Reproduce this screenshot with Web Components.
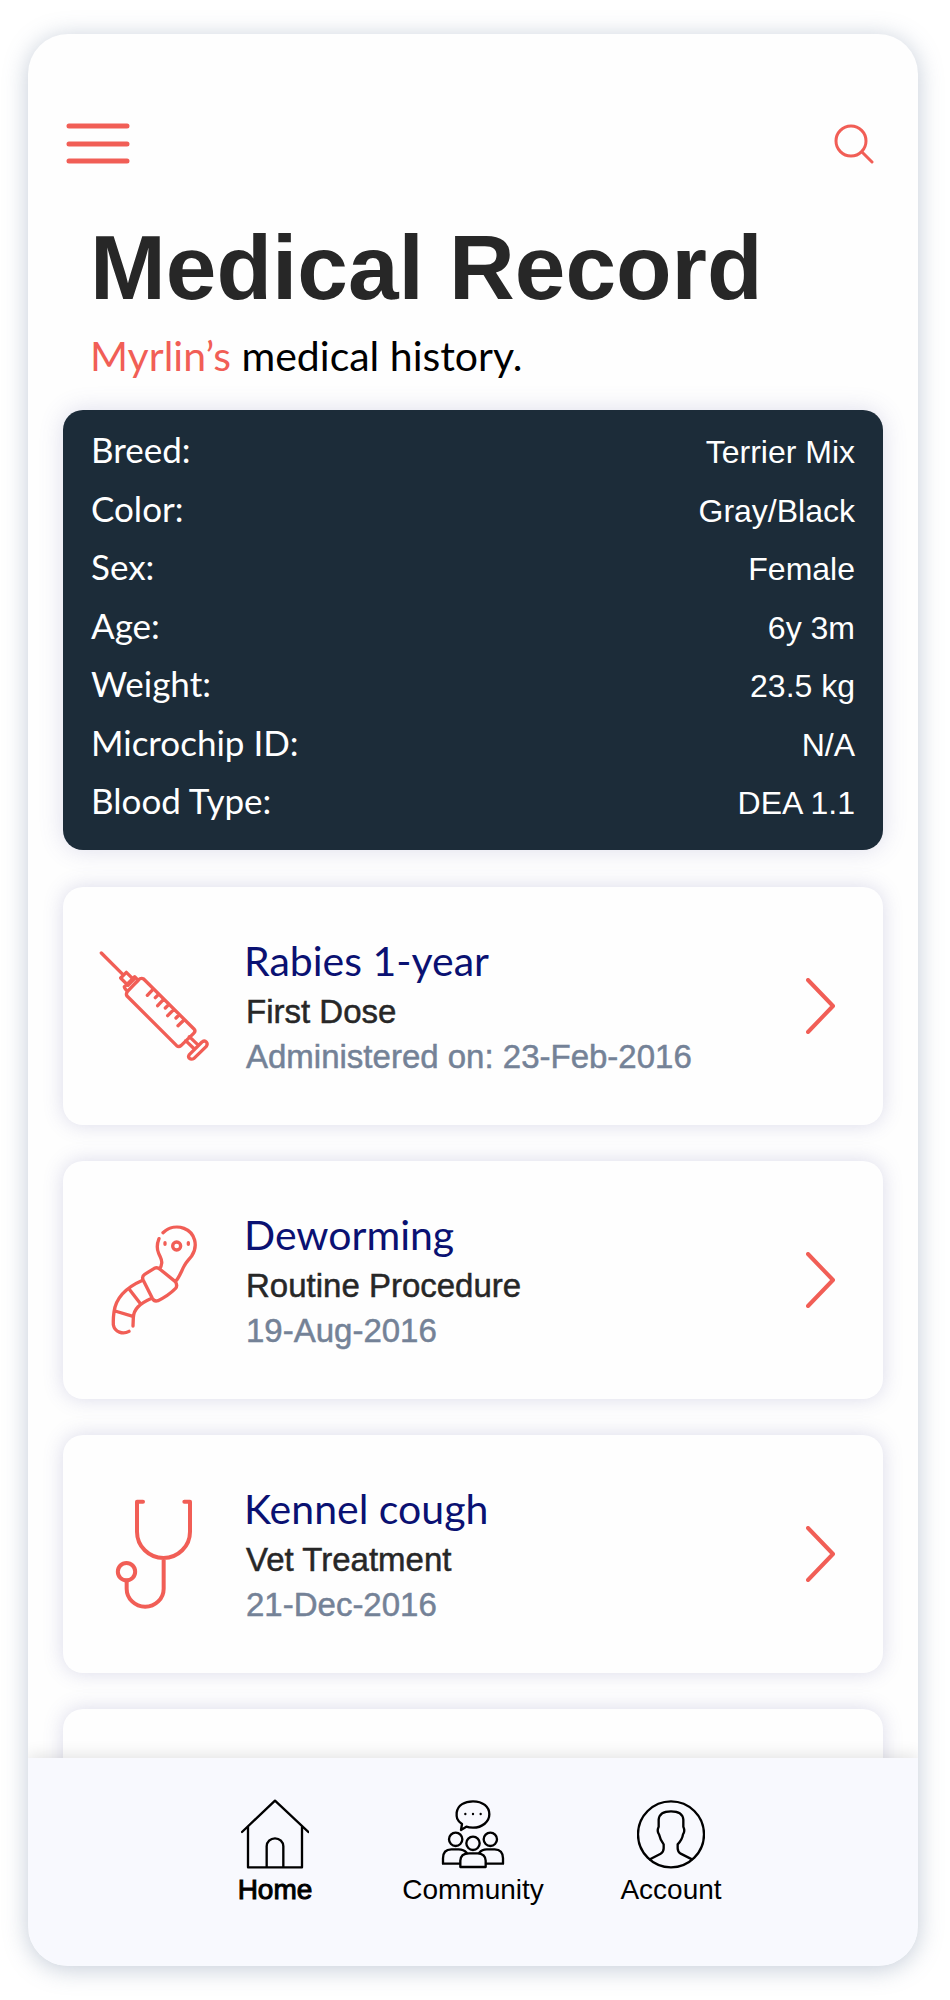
<!DOCTYPE html>
<html lang="en">
<head>
<meta charset="utf-8">
<meta name="viewport" content="width=device-width, initial-scale=1">
<title>Medical Record</title>
<style>
  html, body { margin: 0; height: 100%; background: #fff; }
  body { font-family: "Liberation Sans", Arial, sans-serif; color: #272727;
    --accent: #f15e56; --navy: #1c2c39; --title: #0a1172; --muted: #748297; --round: Lato, "Open Sans", sans-serif; }
</style>
</head>
<body>
<app-frame>
  <app-toolbar slot="header"></app-toolbar>
  <page-heading><span slot="owner">Myrlin’s</span> medical history.</page-heading>
  <pet-facts></pet-facts>
  <record-card icon="syringe"><span slot="title">Rabies 1-year</span><span slot="kind">First Dose</span><span slot="date">Administered on: 23-Feb-2016</span></record-card>
  <record-card icon="worm"><span slot="title">Deworming</span><span slot="kind">Routine Procedure</span><span slot="date">19-Aug-2016</span></record-card>
  <record-card icon="stethoscope"><span slot="title">Kennel cough</span><span slot="kind">Vet Treatment</span><span slot="date">21-Dec-2016</span></record-card>
  <record-card></record-card>
  <tab-bar slot="footer">
    <tab-item icon="home" current>Home</tab-item>
    <tab-item icon="community">Community</tab-item>
    <tab-item icon="account">Account</tab-item>
  </tab-bar>
</app-frame>

<script>
const icons = {
  syringe: `<svg viewBox="112 154 336 336"><path d="M122 163L187 228M197 221L219 243M197 221L180 238L202 260L219 243M222 234L233 245L200 278Q190 268 191 264M222 234L192 264M233 244Q241 236 249 241L400 391Q406 397 399 404L361 441Q354 446 348 441L199 292Q195 286 200 279ZM277 272L260 290M293 288L284 297M308 303L291 321M324 318L314 328M339 333L321 351M355 349L346 358M370 364L352 381M386 414L408 435M375 426L398 448M386 468L424 430Q432 424 437 430Q442 436 437 443L400 479Q392 484 386 479Q381 473 387 467"/></svg>`,
  worm: `<svg viewBox="112 136 336 336"><path d="M307 162C326 144 351 142 370 149C404 162 413 202 393 232C385 243 377 249 370 263C362 278 355 298 344 309M295 180C289 195 289 213 294 224C300 238 305 243 303 254Q302 263 297 271M297 271L344 309Q352 321 344 330Q322 352 292 366Q281 370 275 359L247 303Q243 293 252 287L281 269Q290 265 297 271M246 305C191 329 165 362 160 400C157 421 158 429 158 438C162 461 187 468 205 458M273 359C235 376 219 392 218 417L217 442M207 333L240 376M163 397L217 413"/><circle cx="348" cy="202" r="12"/><path d="M313 192V197M383 192V197"/></svg>`,
  stethoscope: `<svg style="stroke-width:12" viewBox="114 145 336 336"><path d="M249 156H231V246A79.500 79 0 0 0 390 246V156H373M311 326V417A55.500 54 0 0 1 200 417V393"/><circle cx="199.500" cy="366" r="26"/></svg>`,
  home: `<svg viewBox="63 118 204 206"><path d="M66 215L165 121L265 215M84 199V321H246V199M140 320V258A25 24 0 0 1 190 258V320"/></svg>`,
  community: `<svg viewBox="660 118 204 206"><path d="M729 191C713 180 712 170 713 157C716 134 737 123 762 123C791 123 811 139 811 162C811 184 790 202 762 202C754 202 747 201 742 199L726 209ZM723 310H672V294Q672 267 697 267H719Q734 267 743 277M781 277Q789 267 803 267H827Q852 268 852 294V310H801M724 320V301Q725 279 750 279H776Q799 280 800 301V320Z"/><circle cx="710" cy="237" r="20"/><circle cx="762" cy="249" r="20"/><circle cx="814" cy="237" r="20"/><path stroke-width="7" d="M739 161V161.100M762 161V161.100M785 161V161.100"/></svg>`,
  account: `<svg viewBox="1254 118 204 206"><circle cx="1356" cy="222" r="99"/><path d="M1293 297L1325 280Q1334 275 1334 264V252Q1323 237 1320 222Q1313 212 1319 199V178Q1321 153 1356 153Q1391 153 1393 178V199Q1399 212 1392 222Q1390 237 1376 252V264Q1376 275 1385 280L1419 297"/></svg>`,
  menu: `<svg viewBox="0 0 64 42"><path d="M3 4H61M3 22H61M3 39H61"/></svg>`,
  search: `<svg viewBox="0 0 42 42"><circle cx="18" cy="19" r="15"/><path d="M29 30L39 40"/></svg>`,
  chevron: `<svg viewBox="0 0 30 56"><path d="M2 2L27 28L2 54"/></svg>`
};
const iconCss = `svg{display:block;fill:none;stroke:currentColor;stroke-linecap:round;stroke-linejoin:round}`;

function define(name, render) {
  customElements.define(name, class extends HTMLElement {
    constructor() { super(); this.attachShadow({ mode: "open" }); }
    connectedCallback() { this.shadowRoot.innerHTML = render(this); }
  });
}

define("app-frame", () => `
<style>
  :host{display:flex;flex-direction:column;box-sizing:border-box;height:100vh;padding:34px 32px 34px 28px}
  .frame{flex:1;min-height:0;display:flex;flex-direction:column;overflow:hidden;background:#fefefe;border-radius:40px;box-shadow:0 3px 24px rgba(96,118,150,.38)}
  main{flex:1;min-height:0;overflow:hidden;padding:0 35px}
</style>
<div class="frame"><slot name="header"></slot><main><slot></slot></main><slot name="footer"></slot></div>`);

define("app-toolbar", () => `
<style>${iconCss}
  :host{display:flex;justify-content:space-between;padding:88px 43px 0 38px;color:var(--accent)}
  button{all:unset;cursor:pointer;height:42px}
  .menu svg{width:64px;height:42px;stroke-width:5}
  .search svg{width:42px;height:42px;stroke-width:3}
</style>
<button class="menu" aria-label="Menu">${icons.menu}</button>
<button class="search" aria-label="Search">${icons.search}</button>`);

define("page-heading", () => `
<style>
  :host{display:block;padding:52px 27px 0}
  h1{margin:0;font-size:91px;line-height:104px;font-weight:700;color:#272727}
  p{margin:12px 0 30px;font-family:var(--round);font-size:41px;line-height:48px;color:#000}
  ::slotted([slot=owner]){color:var(--accent)}
</style>
<h1>Medical Record</h1><p><slot name="owner"></slot><slot></slot></p>`);

const facts = [["Breed","Terrier Mix"],["Color","Gray/Black"],["Sex","Female"],["Age","6y 3m"],["Weight","23.5 kg"],["Microchip ID","N/A"],["Blood Type","DEA 1.1"]];
define("pet-facts", () => `
<style>
  :host{display:block;margin-bottom:37px;border-radius:20px;background:var(--navy);color:#fff;box-shadow:0 0 24px rgba(90,90,160,.2)}
  dl{margin:0;box-sizing:border-box;min-height:440px;padding:12px 28px 18px;display:grid;grid-auto-rows:1fr}
  div{display:flex;justify-content:space-between;align-items:baseline;line-height:54px}
  dt{font-family:var(--round);font-size:35px}
  dd{margin:0;font-size:32px}
</style>
<dl>${facts.map(([k, v]) => `<div><dt>${k}:</dt><dd>${v}</dd></div>`).join("")}</dl>`);

define("record-card", el => {
  const icon = el.getAttribute("icon");
  return `
<style>${iconCss}
  :host{display:block;min-height:238px;margin-bottom:36px;border-radius:20px;background:#fefefe;box-shadow:0 0 20px rgba(90,90,160,.22)}
  a{box-sizing:border-box;min-height:238px;display:flex;align-items:center;gap:34px;padding:0 47px 0 35px;color:var(--accent);text-decoration:none}
  .icon svg{width:112px;height:112px;stroke-width:10}
  .text{flex:1;padding-top:4px}
  h2,p{margin:0;font-size:33px;line-height:45px;font-weight:400}
  h2{margin-bottom:4px;font-family:var(--round);font-size:41px;line-height:48px;color:var(--title)}
  p{padding-left:2px;-webkit-text-stroke:.5px currentColor}
  .kind{color:#272727}
  .date{color:var(--muted)}
  .go svg{width:30px;height:56px;stroke-width:4}
</style>` + (icon ? `<a href="#${icon}"><span class="icon">${icons[icon]}</span>
<div class="text"><h2><slot name="title"></slot></h2><p class="kind"><slot name="kind"></slot></p><p class="date"><slot name="date"></slot></p></div>
<span class="go">${icons.chevron}</span></a>` : "");
});

define("tab-bar", () => `
<style>
  :host{display:block;position:relative;background:#f8f9fe;box-shadow:0 -2px 16px rgba(0,0,0,.12)}
  nav{display:grid;grid-template-columns:repeat(3,198px);justify-content:center;box-sizing:border-box;min-height:208px;padding-top:41px}
</style>
<nav aria-label="Main"><slot></slot></nav>`);

define("tab-item", el => `
<style>${iconCss}
  :host{display:block;color:#000}
  a{display:flex;flex-direction:column;align-items:center;color:inherit;text-decoration:none;font-size:28px;line-height:42px}
  :host([current]) a{-webkit-text-stroke:1px currentColor}
  svg{width:68px;height:70px;stroke-width:7}
</style>
<a href="#${el.getAttribute("icon")}"${el.hasAttribute("current") ? ' aria-current="page"' : ""}>${icons[el.getAttribute("icon")]}<span><slot></slot></span></a>`);
</script>
</body>
</html>
